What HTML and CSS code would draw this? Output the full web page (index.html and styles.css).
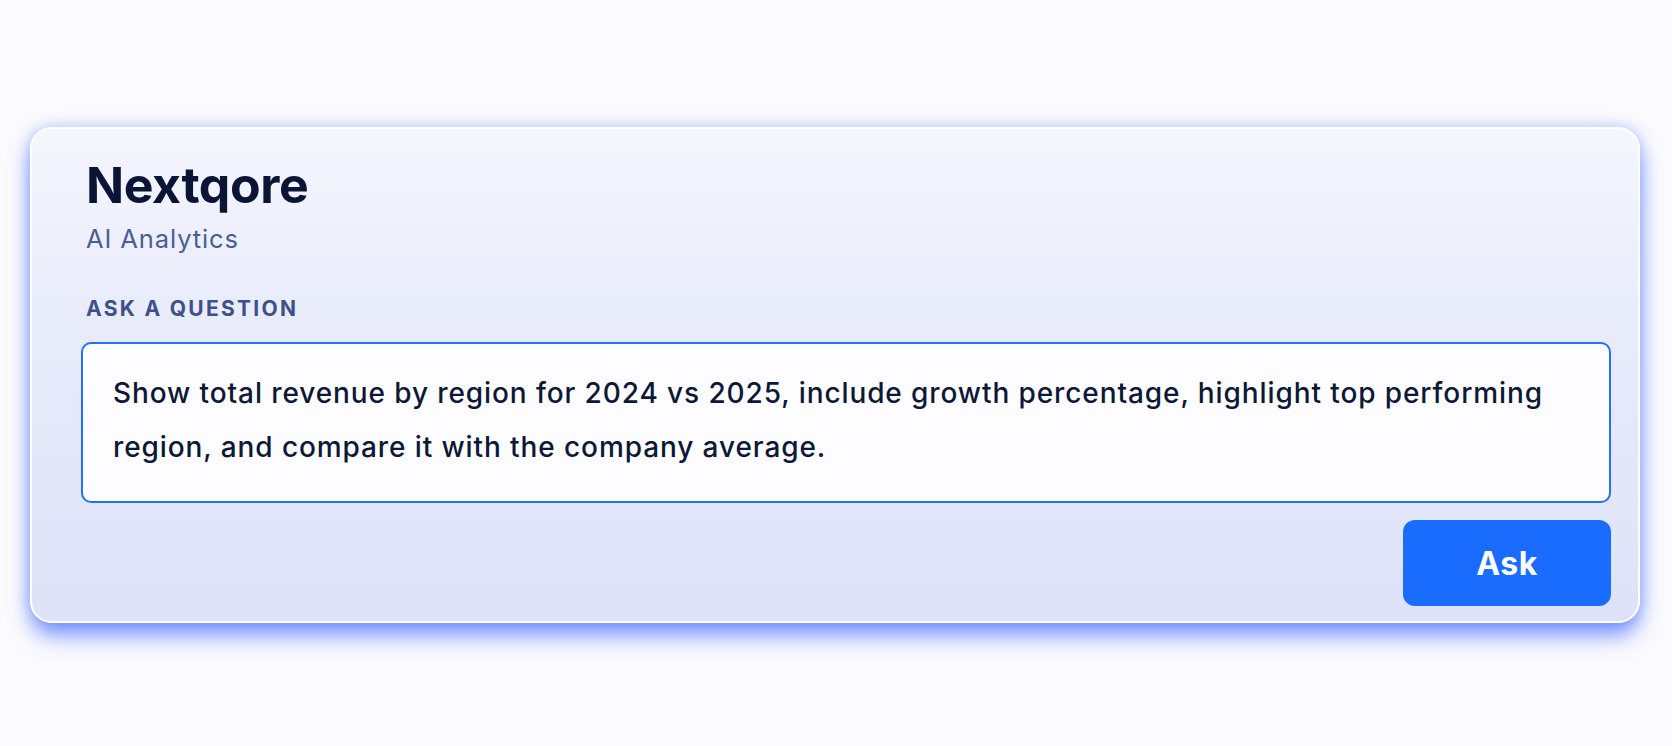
FILE: index.html
```html
<!DOCTYPE html>
<html lang="en">
<head>
<meta charset="utf-8">
<title>Nextqore — AI Analytics</title>
<link rel="stylesheet" href="styles.css">
</head>
<body>
  <main class="page">
    <section class="card">
      <header class="brand">
        <h1 class="brand-title">Nextqore</h1>
        <p class="brand-sub">AI Analytics</p>
      </header>
      <label class="field-label" for="q">ASK A QUESTION</label>
      <textarea id="q" class="question" rows="2">Show total revenue by region for 2024 vs 2025, include growth percentage, highlight top performing region, and compare it with the company average.</textarea>
      <div class="actions">
        <button class="ask-btn" type="button">Ask</button>
      </div>
    </section>
  </main>
</body>
</html>
```

FILE: styles.css
```css
* { box-sizing: border-box; }

html, body {
  margin: 0;
  padding: 0;
  background: #fbfbfd;
  font-family: "Inter", "Noto Sans", "Liberation Sans", sans-serif;
}

.page {
  padding: 127px 32px 0 30px;
  height: 746px;
}

.card {
  display: flex;
  flex-direction: column;
  width: 1610px;
  height: 496px;
  padding: 28px 27px 15px 49px;
  border: 2px solid #ffffff;
  border-radius: 22px;
  background: linear-gradient(180deg, #f5f6fe 0%, #e9ecfa 35%, #dde2f8 100%);
  box-shadow: 0 14px 22px -2px rgba(70, 110, 255, 0.72), 0 0 16px rgba(100, 140, 255, 0.45);
}

.brand {
  padding-left: 5px;
}

.brand-title {
  margin: 0;
  font-size: 50px;
  line-height: 56px;
  font-weight: 700;
  letter-spacing: -0.4px;
  color: #0a1435;
}

.brand-sub {
  margin: 10px 0 0;
  font-size: 25.5px;
  line-height: 32px;
  font-weight: 400;
  letter-spacing: 0.9px;
  color: #4b5e93;
}

.field-label {
  display: block;
  margin: 41px 0 0 5px;
  font-size: 21px;
  line-height: 26px;
  font-weight: 700;
  letter-spacing: 2.3px;
  color: #3d5089;
}

.question {
  display: block;
  margin-top: 20px;
  width: 100%;
  height: 161px;
  padding: 22px 30px 27px 30px;
  border: 2px solid #2170ff;
  border-radius: 10px;
  background: #fdfdff;
  font-family: inherit;
  font-size: 28px;
  line-height: 54px;
  font-weight: 500;
  letter-spacing: 0.9px;
  color: #0d1836;
  resize: none;
  overflow: hidden;
  outline: none;
}

.actions {
  display: flex;
  justify-content: flex-end;
  margin-top: 17px;
}

.ask-btn {
  width: 208px;
  height: 86px;
  border: none;
  border-radius: 12px;
  background: #1a6cff;
  color: #ffffff;
  font-family: inherit;
  font-size: 32px;
  font-weight: 700;
  letter-spacing: 0.5px;
  cursor: pointer;
}
```
